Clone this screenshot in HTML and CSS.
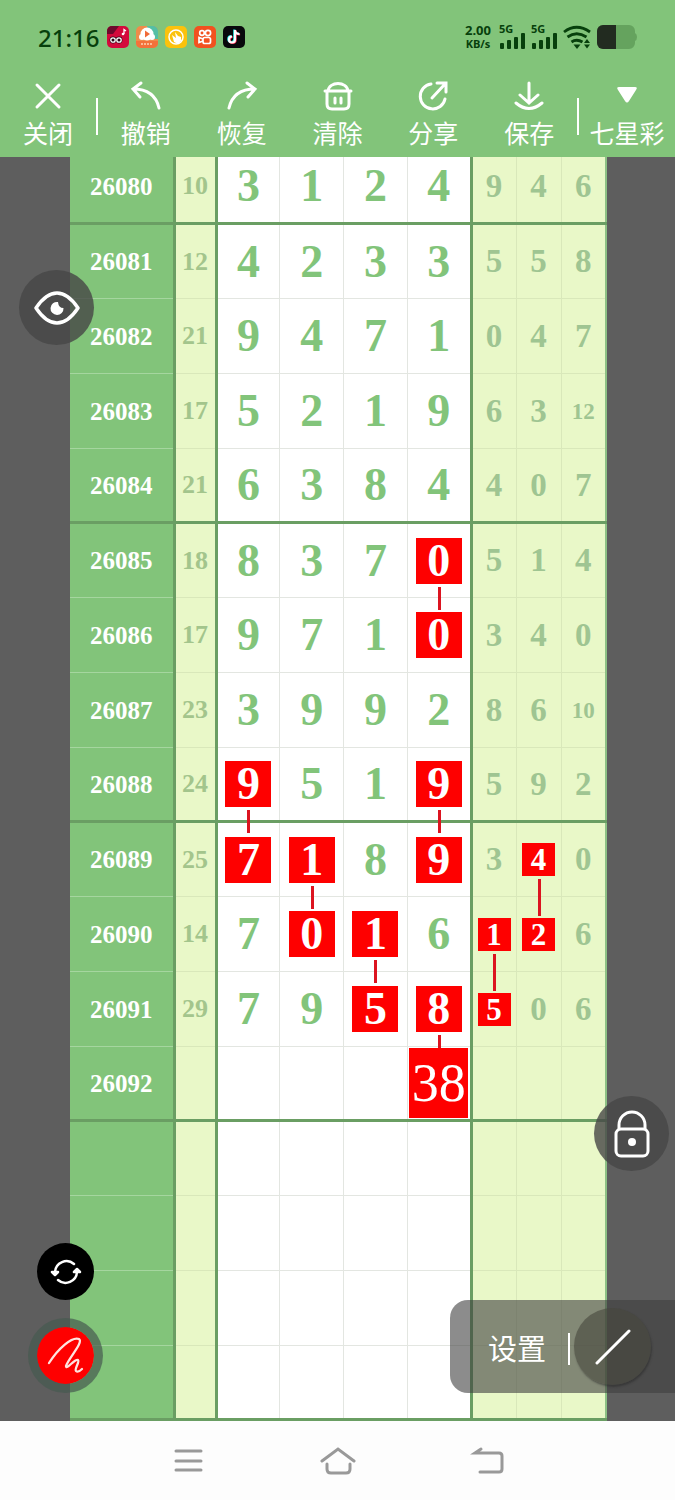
FILE: index.html
```
<!DOCTYPE html>
<html lang="zh-CN">
<head>
  <meta charset="UTF-8">
  <meta name="viewport" content="width=device-width, initial-scale=1">
  <title>七星彩</title>
  <link rel="stylesheet" href="styles.css">
</head>
<body>

<header class="top">
  <div class="status-bar">
    <span class="clock">21:16</span>
    <div class="app-icons">
      <svg width="22" height="22" viewBox="0 0 22 22">
        <rect width="22" height="22" rx="5" fill="#d40a3c"/>
        <path d="M0 8V5a5 5 0 0 1 5-5h7L6 8z" fill="#6d0a2c"/>
        <circle cx="6" cy="14" r="3.4" fill="#2c0614"/><circle cx="12" cy="14" r="3.4" fill="#2c0614"/>
        <circle cx="6" cy="14" r="2.2" fill="none" stroke="#fff" stroke-width="1.3"/>
        <circle cx="12" cy="14" r="2.2" fill="none" stroke="#fff" stroke-width="1.3"/>
        <path d="M17 8V3.5l2 1.5" fill="none" stroke="#fff" stroke-width="1.3"/><circle cx="16" cy="8" r="1.3" fill="#fff"/>
      </svg>
      <svg width="22" height="22" viewBox="0 0 22 22">
        <rect width="22" height="22" rx="5" fill="#f08b4a"/>
        <path d="M11 0h6a5 5 0 0 1 5 5v8H14z" fill="#54bfa5"/>
        <circle cx="11" cy="8" r="6.5" fill="#fff"/><circle cx="6" cy="11" r="3" fill="#fff"/><circle cx="16" cy="11" r="3" fill="#fff"/>
        <path d="M9 4.500l5 3.500-5 3.500z" fill="#f06a38"/>
        <path d="M0 15h22v2a5 5 0 0 1-5 5H5a5 5 0 0 1-5-5z" fill="#f4713a"/>
        <path d="M5 18h12" stroke="#fbd3b5" stroke-width="1.5" stroke-dasharray="2 1"/>
      </svg>
      <svg width="22" height="22" viewBox="0 0 22 22">
        <rect width="22" height="22" rx="5" fill="#fbc20c"/>
        <circle cx="11" cy="11" r="7" fill="none" stroke="#fff" stroke-width="1.5"/>
        <path d="M7 9l4 3-1-6 3 4 3 1v4l-3 3-4-2z" fill="#fff"/>
      </svg>
      <svg width="22" height="22" viewBox="0 0 22 22">
        <rect width="22" height="22" rx="5" fill="#f2511f"/>
        <g fill="none" stroke="#fff" stroke-width="1.7">
          <circle cx="8" cy="7" r="2.3"/><circle cx="14" cy="7" r="2.6"/>
          <rect x="9" y="11.5" width="7.5" height="6" rx="1.8"/><path d="M9 13l-4-1.5v5L9 15"/>
        </g>
      </svg>
      <svg width="22" height="22" viewBox="0 0 22 22">
        <rect width="22" height="22" rx="5" fill="#08090c"/>
        <g fill="none" stroke-width="2.2">
          <path d="M12 4v9.5a3 3 0 1 1-3-3M12 4c0 2.500 2 4 4.500 4" stroke="#25f4ee" transform="translate(-.7 -.4)"/>
          <path d="M12 4v9.5a3 3 0 1 1-3-3M12 4c0 2.500 2 4 4.500 4" stroke="#fe2c55" transform="translate(.6 .5)"/>
          <path d="M12 4v9.5a3 3 0 1 1-3-3M12 4c0 2.500 2 4 4.500 4" stroke="#fff"/>
        </g>
      </svg>
    </div>
    <div class="signals">
      <div class="net-speed"><b>2.00</b><small>KB/s</small></div>
      <div class="cell-signal">
        <span>5G</span>
        <svg width="26" height="16" viewBox="0 0 26 16" fill="#07400c"><rect x="1" y="10" width="4" height="6" rx="1"/><rect x="8" y="7" width="4" height="9" rx="1"/><rect x="15" y="4" width="4" height="12" rx="1"/><rect x="22" y="0" width="4" height="16" rx="1"/></svg>
      </div>
      <div class="cell-signal">
        <span>5G</span>
        <svg width="26" height="16" viewBox="0 0 26 16" fill="#07400c"><rect x="1" y="10" width="4" height="6" rx="1"/><rect x="8" y="7" width="4" height="9" rx="1"/><rect x="15" y="4" width="4" height="12" rx="1"/><rect x="22" y="0" width="4" height="16" rx="1"/></svg>
      </div>
      <svg width="28" height="24" viewBox="0 0 28 24" fill="none" stroke="#07400c" stroke-width="2.8">
        <path d="M1 7q12.500-9.500 26 0M4.500 12q9-6.500 19 0M8.500 17q5-3.500 11 0"/>
        <path d="M10.500 19.500h7L14 24z" fill="#07400c" stroke="none"/>
        <path d="M21 18l3-4 3 4zM21 19.500l3 4 3-4z" fill="#07400c" stroke="none"/>
      </svg>
      <svg width="40" height="24" viewBox="0 0 40 24">
        <path d="M6 0h26a6 6 0 0 1 6 6v2q2 1 2 4t-2 4v2a6 6 0 0 1-6 6H6a6 6 0 0 1-6-6V6a6 6 0 0 1 6-6z" fill="#65a35e"/>
        <path d="M6 0h13v24H6a6 6 0 0 1-6-6V6a6 6 0 0 1 6-6z" fill="#222b20"/>
      </svg>
    </div>
  </div>

  <nav class="toolbar">
    <button type="button">
      <svg viewBox="0 0 32 32"><path d="M5 5l22 22M27 5L5 27"/></svg>
      <span>关闭</span>
    </button>
    <i class="divider"></i>
    <button type="button">
      <svg viewBox="0 0 32 32"><path d="M11 3L3 9l7 8M3 9c14 0 23 6 26 19"/></svg>
      <span>撤销</span>
    </button>
    <button type="button">
      <svg viewBox="0 0 32 32"><path d="M21 3l8 6-7 8M29 9C15 9 6 15 3 28"/></svg>
      <span>恢复</span>
    </button>
    <button type="button">
      <svg viewBox="0 0 32 32"><path d="M3 11h26M5 11v13q0 5 5 5h12q5 0 5-5V11M6 11C7 1 25 1 26 11M13 18v5M19 18v5"/></svg>
      <span>清除</span>
    </button>
    <button type="button">
      <svg viewBox="0 0 32 32"><path d="M14 4A12.500 12.500 0 1 0 28 19M15 18L28 4M20 3h9v9"/></svg>
      <span>分享</span>
    </button>
    <button type="button">
      <svg viewBox="0 0 32 32"><path d="M16 3v19M7 15l9 8 9-8M3 23q13 11 26 0"/></svg>
      <span>保存</span>
    </button>
    <i class="divider"></i>
    <button type="button">
      <svg viewBox="0 0 32 32"><path class="solid" d="M8 7h16q3 0 1 3l-7 11q-2 3-4 0L7 10q-2-3 1-3z"/></svg>
      <span>七星彩</span>
    </button>
  </nav>
</header>

<main class="board">
  <table class="chart">
    <colgroup>
      <col class="col-issue"><col class="col-sum">
      <col><col><col><col>
      <col class="col-trend"><col class="col-trend"><col class="col-trend">
    </colgroup>
    <tbody>
      <tr><th>26080</th><td>10</td><td>3</td><td>1</td><td>2</td><td>4</td><td>9</td><td>4</td><td>6</td></tr>
      <tr><th>26081</th><td>12</td><td>4</td><td>2</td><td>3</td><td>3</td><td>5</td><td>5</td><td>8</td></tr>
      <tr><th>26082</th><td>21</td><td>9</td><td>4</td><td>7</td><td>1</td><td>0</td><td>4</td><td>7</td></tr>
      <tr><th>26083</th><td>17</td><td>5</td><td>2</td><td>1</td><td>9</td><td>6</td><td>3</td><td><small>12</small></td></tr>
      <tr><th>26084</th><td>21</td><td>6</td><td>3</td><td>8</td><td>4</td><td>4</td><td>0</td><td>7</td></tr>
      <tr><th>26085</th><td>18</td><td>8</td><td>3</td><td>7</td><td><b class="hit link">0</b></td><td>5</td><td>1</td><td>4</td></tr>
      <tr><th>26086</th><td>17</td><td>9</td><td>7</td><td>1</td><td><b class="hit">0</b></td><td>3</td><td>4</td><td>0</td></tr>
      <tr><th>26087</th><td>23</td><td>3</td><td>9</td><td>9</td><td>2</td><td>8</td><td>6</td><td><small>10</small></td></tr>
      <tr><th>26088</th><td>24</td><td><b class="hit link">9</b></td><td>5</td><td>1</td><td><b class="hit link">9</b></td><td>5</td><td>9</td><td>2</td></tr>
      <tr><th>26089</th><td>25</td><td><b class="hit">7</b></td><td><b class="hit link">1</b></td><td>8</td><td><b class="hit">9</b></td><td>3</td><td><b class="hit small link">4</b></td><td>0</td></tr>
      <tr><th>26090</th><td>14</td><td>7</td><td><b class="hit">0</b></td><td><b class="hit link">1</b></td><td>6</td><td><b class="hit small link">1</b></td><td><b class="hit small">2</b></td><td>6</td></tr>
      <tr><th>26091</th><td>29</td><td>7</td><td>9</td><td><b class="hit">5</b></td><td><b class="hit link">8</b></td><td><b class="hit small">5</b></td><td>0</td><td>6</td></tr>
      <tr><th>26092</th><td></td><td></td><td></td><td></td><td><b class="hit pick">38</b></td><td></td><td></td><td></td></tr>
      <tr><th></th><td></td><td></td><td></td><td></td><td></td><td></td><td></td><td></td></tr>
      <tr><th></th><td></td><td></td><td></td><td></td><td></td><td></td><td></td><td></td></tr>
      <tr><th></th><td></td><td></td><td></td><td></td><td></td><td></td><td></td><td></td></tr>
      <tr><th></th><td></td><td></td><td></td><td></td><td></td><td></td><td></td><td></td></tr>
    </tbody>
  </table>

  <button type="button" class="fab fab-eye" aria-label="显示">
    <svg width="46" height="34" viewBox="0 0 46 34" fill="none" stroke="#fff" stroke-width="3.5">
      <path d="M2 17Q12 2 23 2t21 15Q34 32 23 32T2 17z" stroke-linejoin="round"/>
      <path d="M24 11a6.500 6.500 0 1 0 5.500 6q-5 0-5.500-6z" fill="#fff" stroke="none"/>
    </svg>
  </button>

  <button type="button" class="fab fab-lock" aria-label="锁定">
    <svg width="36" height="48" viewBox="0 0 36 48" fill="none" stroke="#fff" stroke-width="3">
      <rect x="2" y="19" width="32" height="27" rx="5"/>
      <path d="M5 19v-4a13 13 0 0 1 26 0v4"/>
      <circle cx="18" cy="32" r="4" fill="#fff" stroke="none"/>
    </svg>
  </button>

  <button type="button" class="fab fab-sync" aria-label="刷新">
    <svg width="32" height="28" viewBox="0 0 32 28" fill="none" stroke="#fff" stroke-width="2.5" stroke-linecap="round" stroke-linejoin="round">
      <path d="M5 14A11.500 11.500 0 0 1 24 6M27 14A11.500 11.500 0 0 1 8 22"/>
      <path d="M2 14h6l-3 3zM24 14h6l-3-3z" fill="#fff"/>
    </svg>
  </button>

  <button type="button" class="fab fab-pen" aria-label="画笔">
    <svg width="57" height="57" viewBox="0 0 57 57" fill="none" stroke="#ffe3df" stroke-width="2.3" stroke-linecap="round" stroke-linejoin="round">
      <path d="M12 36C21 22 35 9 42 12c5 3-11 20-13 27 0 5 9-8 12-6 2 2-4 9-2 11 2 2 4 0 6-2"/>
    </svg>
  </button>

  <div class="settings">
    <button type="button" class="settings-btn">设置</button>
    <i class="divider"></i>
    <button type="button" class="line-btn" aria-label="直线">
      <svg width="36" height="36" viewBox="0 0 36 36"><path d="M2 34L34 2" stroke="#fff" stroke-width="3" stroke-linecap="round"/></svg>
    </button>
  </div>
</main>

<nav class="system-nav">
  <button type="button" aria-label="菜单">
    <svg width="36" height="32" viewBox="0 0 36 32"><path d="M6 6h25M6 16h25M6 25h25"/></svg>
  </button>
  <button type="button" aria-label="主页">
    <svg width="36" height="32" viewBox="0 0 36 32"><path d="M2 16L18 4l16 12M7 19v5q0 4 4 4h15q4 0 4-4v-5"/></svg>
  </button>
  <button type="button" aria-label="返回">
    <svg width="36" height="32" viewBox="0 0 36 32"><path d="M11 4L5 8h24q3 0 3 3v13q0 3-3 3H10"/></svg>
  </button>
</nav>

</body>
</html>
```
FILE: styles.css
```
* {
  box-sizing: border-box;
}

body {
  margin: 0;
  height: 100vh;
  display: flex;
  flex-direction: column;
  background: #5e5e5e;
  font-family: "Noto Sans", "Noto Sans CJK SC", sans-serif;
}

button {
  padding: 0;
  border: none;
  background: none;
  color: #fff;
  font-family: inherit;
  cursor: pointer;
}

svg {
  display: block;
}

/* Header */
.top {
  flex: none;
  background: #82c47a;
}

.status-bar {
  display: flex;
  align-items: center;
  height: 74px;
  padding: 0 38px;
  color: #07400c;
}

.clock {
  font-size: 24px;
  font-weight: 500;
}

.app-icons {
  display: flex;
  gap: 7px;
  margin-left: 8px;
}

.signals {
  display: flex;
  align-items: center;
  gap: 6px;
  margin-left: auto;
}

.net-speed {
  display: flex;
  flex-direction: column;
  align-items: center;
  margin-right: 2px;
  font-family: "Open Sans", sans-serif;
}

.net-speed b {
  font-size: 13px;
  line-height: 14px;
}

.net-speed small {
  font-size: 11px;
  font-weight: 700;
  line-height: 14px;
}

.cell-signal {
  display: flex;
  flex-direction: column;
}

.cell-signal span {
  font-size: 11px;
  font-weight: 700;
  line-height: 8px;
}

.toolbar {
  display: flex;
  height: 83px;
}

.toolbar button {
  flex: 1;
  display: flex;
  flex-direction: column;
  align-items: center;
  padding-top: 6px;
  font-size: 25px;
  line-height: 34px;
  white-space: nowrap;
}

.toolbar svg {
  width: 32px;
  height: 32px;
  margin-bottom: 4px;
  fill: none;
  stroke: #fff;
  stroke-width: 3;
  stroke-linecap: round;
}

.toolbar .solid {
  fill: #fff;
  stroke: none;
}

.divider {
  width: 2px;
  background: #fff;
}

.toolbar .divider {
  height: 37px;
  margin-top: 24px;
}

/* Chart, scrolled to the last row */
.board {
  flex: 1;
  min-height: 0;
  position: relative;
  display: flex;
  flex-direction: column;
  justify-content: flex-end;
  overflow: hidden;
}

.chart {
  flex: none;
  width: calc(100% - 138px);
  margin-left: 70px;
  table-layout: fixed;
  border-collapse: collapse;
  background: #fff;
  font-family: "Liberation Serif", serif;
  font-weight: 700;
}

.col-issue {
  width: 104px;
}

.col-sum {
  width: 42px;
}

.col-trend {
  width: 45px;
}

.chart tr {
  height: 75px;
}

.chart tr:nth-child(4n+1) {
  height: 74px;
}

.chart th,
.chart td {
  padding: 0;
  border: 1px solid #e3e6e1;
  text-align: center;
  line-height: 1;
}

.chart th {
  background: #82c47a;
  border-color: #a5d69f;
  border-left: none;
  border-right: 3px solid #6a9e63;
  color: #fff;
  font-size: 25px;
}

.chart td {
  color: #82c47a;
  font-size: 46px;
}

.chart td:nth-child(2) {
  background: #e9f8c8;
  border-color: #d9e8ba;
  border-right: 3px solid #6a9e63;
  color: #a3c58c;
  font-size: 26px;
}

.chart td:nth-child(6) {
  border-right: 3px solid #6a9e63;
}

.chart td:nth-child(n+7) {
  background: #e9f8c8;
  border-color: #d9e8ba;
  color: #9fc592;
  font-size: 33px;
}

.chart td:last-child {
  border-right: 2px solid #8dc185;
}

/* heavy line under every fourth row */
.chart tr:nth-child(4n+1) > :nth-child(n) {
  border-bottom: 3px solid #6a9e63;
}

.chart td small {
  display: block;
  font-size: 23px;
}

.hit {
  position: relative;
  display: flex;
  align-items: center;
  justify-content: center;
  width: 46px;
  height: 46px;
  margin: 0 auto;
  background: #fe0000;
  color: #fff;
}

.hit.small {
  width: 33px;
  height: 33px;
  font-size: 31px;
}

.hit.pick {
  width: 59px;
  height: 70px;
  font-size: 54px;
  font-weight: 400;
}

/* line down to the next hit */
.hit.link::after {
  content: "";
  position: absolute;
  top: calc(100% + 3px);
  left: calc(50% - 1px);
  width: 3px;
  height: 23px;
  background: #dc1420;
}

.hit.small.link::after {
  height: 37px;
}

/* Floating buttons */
.fab {
  position: absolute;
  display: flex;
  align-items: center;
  justify-content: center;
  width: 75px;
  height: 75px;
  border-radius: 50%;
  background: rgba(70, 70, 70, 0.8);
}

.fab-eye {
  left: 19px;
  top: 113px;
}

.fab-lock {
  right: 6px;
  bottom: 250px;
}

.fab-sync {
  left: 37px;
  bottom: 121px;
  width: 57px;
  height: 57px;
  background: #000;
}

.fab-pen {
  left: 28px;
  bottom: 28px;
  background: #fe0000;
  background-clip: content-box;
  padding: 9px;
  box-shadow: inset 0 0 0 9px rgba(70, 90, 80, 0.7);
}

.settings {
  position: absolute;
  right: 0;
  bottom: 28px;
  display: flex;
  align-items: center;
  width: 225px;
  height: 93px;
  padding-left: 38px;
  border-radius: 18px 0 0 18px;
  background: rgba(64, 64, 64, 0.6);
}

.settings-btn {
  font-size: 29px;
}

.settings .divider {
  height: 32px;
  margin: 4px 4px 0 22px;
}

.line-btn {
  display: flex;
  align-items: center;
  justify-content: center;
  width: 77px;
  height: 77px;
  border-radius: 50%;
  background: rgba(70, 70, 60, 0.6);
  box-shadow: 1px 2px 2px rgba(40, 40, 40, 0.5);
}

/* System navigation */
.system-nav {
  flex: none;
  display: flex;
  height: 79px;
  padding: 0 calc(100% / 6);
  background: #fdfdfd;
}

.system-nav button {
  flex: 1;
  display: flex;
  align-items: center;
  justify-content: center;
}

.system-nav svg {
  fill: none;
  stroke: #999;
  stroke-width: 3;
  stroke-linecap: round;
}
```
